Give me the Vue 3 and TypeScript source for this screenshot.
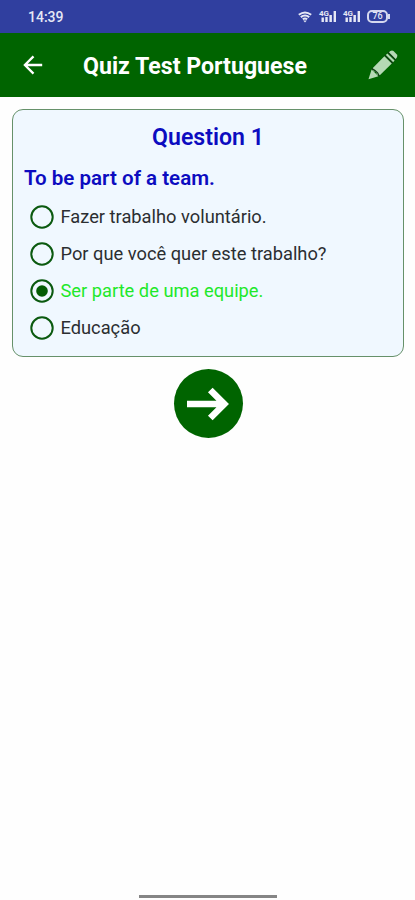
<script setup lang="ts">
import { ref } from 'vue'

interface Answer {
  id: number
  text: string
  correct: boolean
}

const answers: Answer[] = [
  { id: 1, text: 'Fazer trabalho voluntário.', correct: false },
  { id: 2, text: 'Por que você quer este trabalho?', correct: false },
  { id: 3, text: 'Ser parte de uma equipe.', correct: true },
  { id: 4, text: 'Educação', correct: false },
]

const selected = ref<number>(3)
</script>

<template>
  <div class="screen">
    <div class="status">
      <span class="time">14:39</span>
      <div class="indicators">
        <svg class="wifi" width="14" height="12" viewBox="0 0 14 12" fill="none" stroke="#e6e8f5">
          <path d="M.8 3.8Q7-.9 13.2 3.8M2.8 6.1Q7 2.8 11.2 6.1M4.8 8.3Q7 6.6 9.2 8.3" stroke-width="2" />
          <path d="M5.2 9.4h3.6L7 11.6z" fill="#e6e8f5" stroke="none" />
        </svg>
        <div v-for="n in 2" :key="n" class="signal">
          <span class="net">4G</span>
          <svg width="18" height="13" viewBox="0 0 18 13" fill="#e6e8f5">
            <path d="M2.5 7.5h2.4V12H2.5zM6.3 7h2.4v5H6.3zM10.4 5h2.5v7h-2.5zM14.6 1H17v11h-2.4z" />
          </svg>
        </div>
        <div class="battery"><span>76</span></div>
      </div>
    </div>

    <header class="toolbar">
      <button class="icon-button back" aria-label="Back">
        <svg width="20" height="20" viewBox="0 0 20 20" fill="none" stroke="#fff" stroke-width="2.3">
          <path d="M19.2 10H2M10.5 1.4 1.9 10l8.6 8.6" />
        </svg>
      </button>
      <h1>Quiz Test Portuguese</h1>
      <button class="icon-button" aria-label="Edit">
        <svg width="30" height="30" viewBox="0 0 30 30">
          <g fill="#b5d9b5">
            <path d="M.5 29.3 3.6 19.6 10.4 26.2z" />
            <path d="M4.6 18.2 16.4 6.2 23.8 13.6 11.8 25.2 8.9 24.6 8.2 21.8 5.3 21.2z" />
            <path d="M17.8 4.9 19.4 3.4 26.6 10.6 25.1 12.2z" />
            <path d="M20.7 2.4 22.3 1.1Q24.1.1 25.5 1.1L28.9 4.5Q29.9 5.7 28.8 7.4L27.6 9.2z" />
          </g>
          <path d="M16.7 5.1 24.9 13.3M20 2.3 27.8 10.1M3.6 18.4 7 20.6 9.6 22.8 11.4 26.2" stroke="#123f16" stroke-width="1.3" fill="none" />
        </svg>
      </button>
    </header>

    <main>
      <section class="card">
        <h2>Question 1</h2>
        <p class="prompt">To be part of a team.</p>
        <div class="answers" role="radiogroup">
          <div
            v-for="answer in answers"
            :key="answer.id"
            class="answer"
            :class="{ correct: answer.correct && selected === answer.id }"
            role="radio"
            :aria-checked="selected === answer.id"
            @click="selected = answer.id"
          >
            <svg width="24" height="24" viewBox="0 0 24 24">
              <circle cx="12" cy="12" r="10.7" fill="none" stroke="#0b5a10" stroke-width="2" />
              <circle v-if="selected === answer.id" cx="12" cy="12" r="5.8" fill="#045c04" />
            </svg>
            <span>{{ answer.text }}</span>
          </div>
        </div>
      </section>

      <button class="next" aria-label="Next">
        <svg width="44" height="34" viewBox="0 0 44 34" fill="none" stroke="#fff" stroke-width="6.6">
          <path d="M1 17h37M24.3 3 38.3 17 24.3 31" />
        </svg>
      </button>
    </main>

    <div class="home-bar"></div>
  </div>
</template>

<style>
body {
  background: #fefefe;
}
</style>

<style scoped>
.screen {
  display: flex;
  flex-direction: column;
  height: 900px;
  overflow: hidden;
  background: #fefefe;
  font-family: Roboto, 'Liberation Sans', sans-serif;
}

button {
  border: 0;
  padding: 0;
  background: none;
}

.status {
  display: flex;
  align-items: center;
  justify-content: space-between;
  flex: none;
  box-sizing: border-box;
  height: 33px;
  padding: 0 25px 0 28px;
  background: #303f9f;
  color: #e6e8f5;
}

.time {
  font-size: 14px;
  font-weight: 500;
  line-height: 16px;
}

.indicators {
  display: flex;
  align-items: center;
}

.wifi {
  margin-right: 7px;
}

.signal {
  display: flex;
  position: relative;
  width: 18px;
  margin-right: 6px;
}

.net {
  position: absolute;
  left: 0;
  top: 0;
  font-size: 8px;
  font-weight: 700;
  line-height: 8px;
}

.battery {
  display: flex;
  position: relative;
  align-items: center;
  justify-content: center;
  box-sizing: border-box;
  width: 21px;
  height: 13px;
  margin-right: 2px;
  border: 2px solid #d5d8ef;
  border-radius: 5px;
  font-size: 9px;
  font-weight: 500;
  line-height: 9px;
}

.battery::after {
  content: '';
  position: absolute;
  right: -4px;
  top: 2px;
  width: 2px;
  height: 5px;
  background: #d5d8ef;
}

.toolbar {
  display: flex;
  align-items: center;
  flex: none;
  box-sizing: border-box;
  height: 64px;
  padding: 0 17px 0 23px;
  background: #006400;
  color: #fff;
}

.icon-button {
  display: flex;
}

.back {
  width: 60px;
}

h1 {
  flex: 1;
  margin: 4px 0 0;
  font-size: 23.15px;
  font-weight: 700;
  line-height: 28px;
  white-space: nowrap;
}

main {
  display: flex;
  flex: 1;
  flex-direction: column;
  align-items: center;
  padding: 12px 11px 0 12px;
}

.card {
  box-sizing: border-box;
  width: 100%;
  height: 248px;
  padding: 14px 11px 0;
  border: 1px solid #66916a;
  border-radius: 11px;
  background: #f0f8ff;
}

h2 {
  margin: 0;
  color: #0c0cc0;
  font-size: 23.1px;
  font-weight: 600;
  line-height: 28px;
  text-align: center;
}

.prompt {
  margin: 13px 0 0;
  color: #0c0cc0;
  font-size: 20.55px;
  font-weight: 600;
  line-height: 26px;
}

.answers {
  margin-top: 7px;
  padding-left: 6px;
}

.answer {
  display: flex;
  align-items: center;
  gap: 6.5px;
  height: 37px;
  color: #2b2e31;
  font-size: 18.3px;
  line-height: 24px;
  white-space: nowrap;
}

.answer span {
  padding-top: 1px;
}

.correct {
  color: #1ee82a;
}

.next {
  display: flex;
  align-items: center;
  justify-content: center;
  width: 69px;
  height: 69px;
  margin-top: 12px;
  border-radius: 50%;
  background: #006400;
}

.home-bar {
  align-self: center;
  flex: none;
  width: 138px;
  height: 3px;
  margin-bottom: 2px;
  background: #858585;
}
</style>
